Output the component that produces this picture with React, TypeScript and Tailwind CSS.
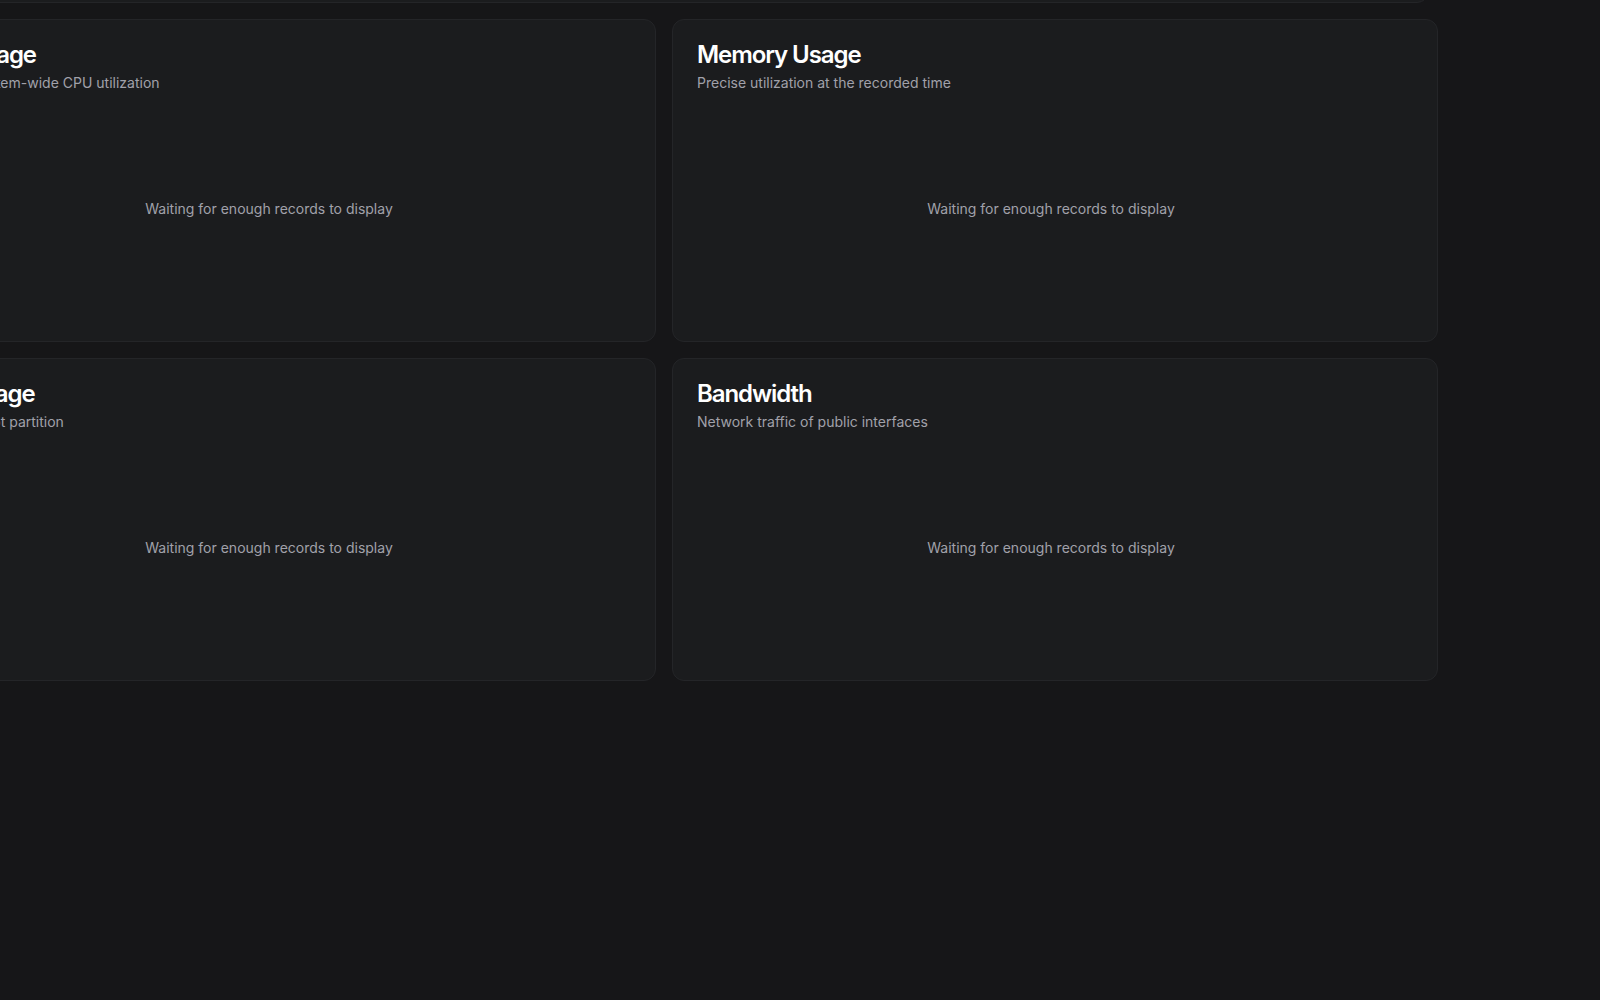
const charts = [
  { title: "CPU Usage", description: "Average system-wide CPU utilization" },
  { title: "Memory Usage", description: "Precise utilization at the recorded time" },
  { title: "Disk Usage", description: "Usage of root partition" },
  { title: "Bandwidth", description: "Network traffic of public interfaces" },
];

function ChartCard({ title, description }: { title: string; description: string }) {
  return (
    <div className="rounded-xl border border-[#242528] bg-[#1b1c1e] text-white">
      <div className="flex flex-col gap-1.5 p-6 pt-[23px]">
        <h3 className="text-2xl font-semibold leading-none tracking-[-0.045em]">{title}</h3>
        <p className="text-sm text-[#a1a1aa]">{description}</p>
      </div>
      <div className="px-6 pb-6">
        <div className="flex h-[200px] items-center justify-center pb-4 pr-2">
          <span className="text-sm text-[#a1a1aa]">Waiting for enough records to display</span>
        </div>
      </div>
    </div>
  );
}

export default function App() {
  return (
    <div
      className="h-[1000px] w-[1600px] overflow-hidden bg-[#161618]"
      style={{ fontFamily: "Inter, 'Noto Sans', sans-serif" }}
    >
      <div className="ml-[-110px] mt-[-197px] w-[1548px]">
        {/* previous card, scrolled out of view */}
        <div className="mr-[9px] h-[200px] rounded-xl border border-[#242528] bg-[#1b1c1e]" />
        <div className="mt-4 grid grid-cols-2 gap-4">
          {charts.map((c) => (
            <ChartCard key={c.title} title={c.title} description={c.description} />
          ))}
        </div>
      </div>
    </div>
  );
}
